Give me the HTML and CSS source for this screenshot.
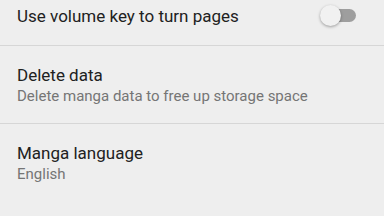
FILE: index.html
```html
<!DOCTYPE html>
<html lang="en">
<head>
    <meta charset="UTF-8">
    <meta name="viewport" content="width=device-width, initial-scale=1.0">
    <title>Settings</title>
    <link rel="stylesheet" href="styles.css">
</head>
<body>
    <div class="settings">
        <div class="row row-top">
            <div class="row-text">
                <div class="title">Use volume key to turn pages</div>
            </div>
            <div class="switch">
                <span class="track"></span>
                <span class="thumb"></span>
            </div>
        </div>
        <div class="row">
            <div class="row-text">
                <div class="title">Delete data</div>
                <div class="summary">Delete manga data to free up storage space</div>
            </div>
        </div>
        <div class="row">
            <div class="row-text">
                <div class="title">Manga language</div>
                <div class="summary">English</div>
            </div>
        </div>
    </div>
</body>
</html>
```

FILE: styles.css
```css
body {
    margin: 0;
    background-color: #eeeeee;
    font-family: Roboto, "Noto Sans", sans-serif;
    overflow: hidden;
}
.settings {
    display: flex;
    flex-direction: column;
}
.row {
    display: flex;
    align-items: center;
    padding: 19px 17px 17px 17px;
    border-bottom: 1px solid #d6d6d6;
}
.row:last-child {
    border-bottom: none;
}
.row-top {
    padding-top: 5px;
    padding-bottom: 18px;
}
.row-text {
    flex: 1;
}
.title {
    font-size: 17px;
    line-height: 20px;
    color: #212121;
}
.summary {
    margin-top: 1px;
    font-size: 15px;
    line-height: 20px;
    color: #757575;
}
/* Switch */
.switch {
    position: relative;
    width: 38px;
    height: 22px;
    margin-right: 9px;
}
.track {
    position: absolute;
    left: 4px;
    top: 4px;
    width: 32px;
    height: 13px;
    border-radius: 7px;
    background-color: #9e9e9e;
}
.thumb {
    position: absolute;
    left: 0;
    top: 0;
    width: 21px;
    height: 21px;
    border-radius: 50%;
    background-color: #f1f1f1;
    box-shadow: 0 1px 3px rgba(0, 0, 0, 0.35);
}
```
